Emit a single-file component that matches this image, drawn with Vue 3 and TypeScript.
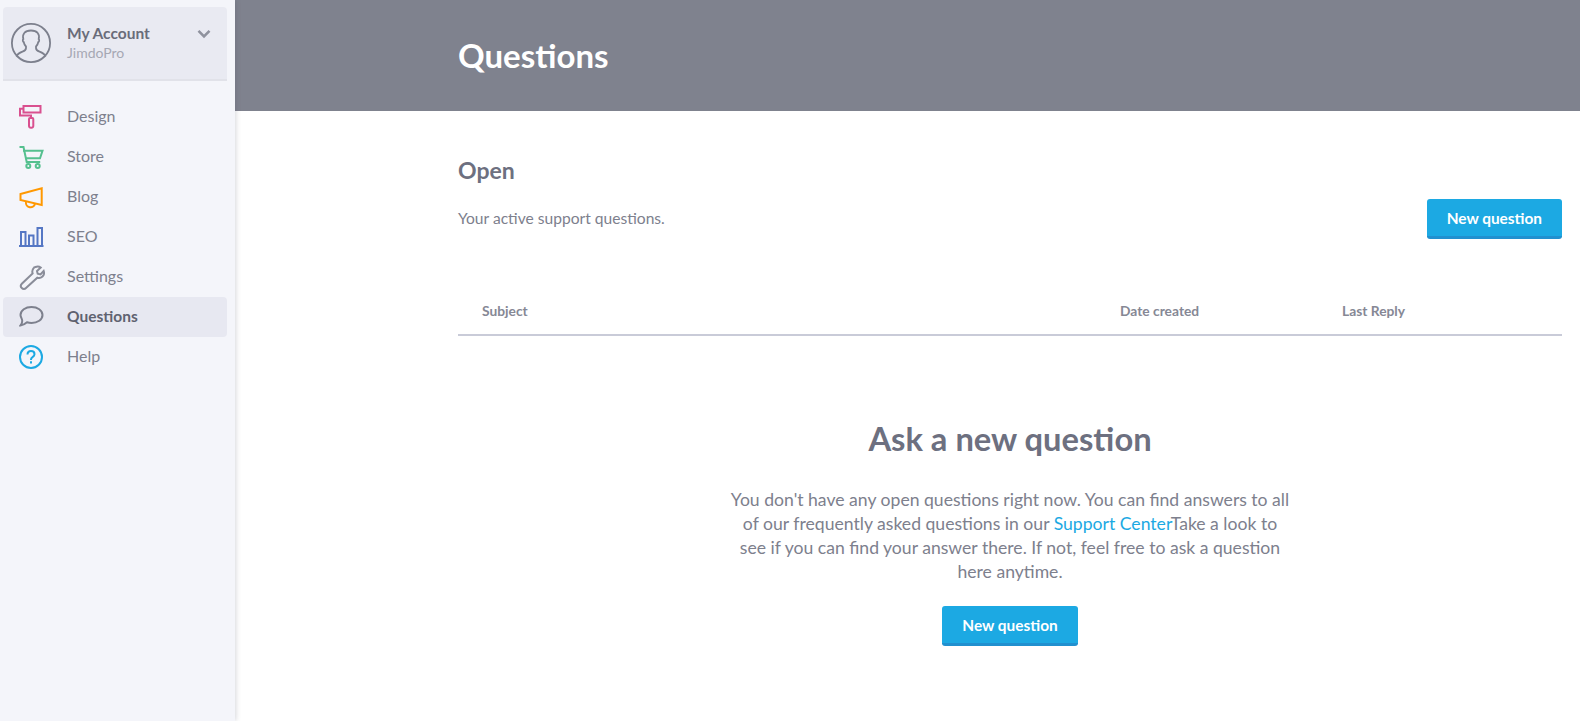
<template>
  <div class="page">
    <aside class="sidebar">
      <div class="account">
        <svg class="avatar" width="42" height="42" viewBox="0 0 42 42" fill="none" stroke="#7d808d" stroke-width="1.800">
          <circle cx="21" cy="21" r="19.100" />
          <path d="M6.500 34.500c1-3 3.200-3.800 6-4.800 2.200-.8 3.500-1.700 3.500-3.700v-1.500c-1.500-1.500-2-3-2.300-4.500-1-.3-1.200-2.500-.4-3-.5-2-.3-4.500 1-6 1-1.200 3.500-2.500 6.700-2.500s5.700 1.300 6.700 2.500c1.300 1.500 1.500 4 1 6 .8.500.6 2.700-.4 3-.3 1.500-.8 3-2.300 4.500V26c0 2 1.300 2.900 3.500 3.700 2.800 1 5 1.800 6 4.800" />
        </svg>
        <div class="account-text">
          <div class="account-name">My Account</div>
          <div class="account-plan">JimdoPro</div>
        </div>
        <svg class="chevron" width="14" height="10" viewBox="0 0 14 10" fill="none" stroke="#8f929e" stroke-width="2.600">
          <path d="M1.500 1.800 7 7.300l5.500-5.500" />
        </svg>
      </div>

      <nav class="nav">
        <a v-for="item in navItems" :key="item.label" class="nav-item" :class="{ active: item.active }">
          <span class="nav-icon" :style="{ color: item.color }">
            <svg width="26" height="26" viewBox="0 0 26 26" fill="none" stroke="currentColor" stroke-width="2">
              <path v-for="(d, i) in item.paths" :key="i" :d="d" />
              <circle v-for="(c, i) in item.circles || []" :key="'c' + i" :cx="c[0]" :cy="c[1]" :r="c[2]" />
            </svg>
          </span>
          <span class="nav-label">{{ item.label }}</span>
        </a>
      </nav>
    </aside>

    <main class="main">
      <header class="banner">
        <h1>Questions</h1>
      </header>

      <section class="content">
        <h2>Open</h2>
        <div class="intro">
          <p>Your active support questions.</p>
          <button class="btn" type="button">New question</button>
        </div>

        <div class="table-head">
          <span class="col-subject">Subject</span>
          <span class="col-date">Date created</span>
          <span class="col-reply">Last Reply</span>
        </div>

        <div class="empty">
          <h3>Ask a new question</h3>
          <p>
            You don't have any open questions right now. You can find answers to all of our frequently asked
            questions in our <a class="link">Support Center</a>Take a look to see if you can find your answer
            there. If not, feel free to ask a question here anytime.
          </p>
          <button class="btn" type="button">New question</button>
        </div>
      </section>
    </main>
  </div>
</template>

<script setup lang="ts">
interface NavItem {
  label: string
  color: string
  paths: string[]
  circles?: number[][]
  active?: boolean
}

const navItems: NavItem[] = [
  {
    label: 'Design',
    color: '#d9508f',
    paths: [
      'M4.500 2h17v6.500h-17z',
      'M4.500 4.800H1v6.700h11v2.500',
      'M11 14h2.300a1 1 0 0 1 1 1v7a1.800 1.800 0 0 1-1.800 1.800h-.7A1.800 1.800 0 0 1 10 22v-7a1 1 0 0 1 1-1z'
    ]
  },
  {
    label: 'Store',
    color: '#55c08f',
    paths: ['M.500 3h4l3.200 15h13.500', 'M4 6.700h19.500l-2.500 7.500H6'],
    circles: [[9.300, 22, 2], [18.700, 22, 2]]
  },
  {
    label: 'Blog',
    color: '#ff9800',
    paths: ['M1.500 10 22.700 4.300V21L1.500 16z', 'M7 18a4.500 4.500 0 0 0 9 1.500']
  },
  {
    label: 'SEO',
    color: '#5577c4',
    paths: ['M0 22h24.500', 'M2 22V8h4.500v14', 'M10 22V11.500h4.500V22', 'M18.500 22V4H23v18']
  },
  {
    label: 'Settings',
    color: '#8a8d99',
    paths: [
      'M16.500 3c2-.7 4-.3 5.200.600l-3.700 3.400.7 2.800 2.800.7 3.200-3.500c.7 2 .2 4.200-1.200 5.500-1.500 1.400-3.500 1.800-5.200 1.200L7 24c-1.200 1.200-3 1.200-4.200 0-1.200-1.200-1.200-3 0-4.200l10.800-10.400c-.6-1.800-.2-4 1.200-5.600.5-.6 1-.4 1.700-.8z'
    ]
  },
  {
    label: 'Questions',
    color: '#7d808d',
    active: true,
    paths: [
      'M12.500 3c6 0 11 3.400 11 8s-5 8-11 8c-1.500 0-3-.2-4.500-.7-1.700 1.500-4 3-6.500 3.200 1.200-1.300 1.800-3 1.700-5C3 14.500 1.500 13 1.500 11c0-4.600 5-8 11-8z'
    ]
  },
  {
    label: 'Help',
    color: '#1ca9e3',
    paths: [
      'M8.500 10.500c0-2.200 1.600-3.500 3.500-3.500s3.500 1.300 3.500 3.200c0 1.500-1 2.200-2 2.900-.9.600-1.500 1.200-1.500 2.400v.5',
      'M12 17.300v2.200'
    ],
    circles: [[12, 13, 11]]
  }
]
</script>

<style>
html,
body {
  margin: 0;
  background: #fff;
}
</style>

<style scoped>
.page {
  display: flex;
  height: 721px;
  overflow: hidden;
  font-family: Lato, "Noto Sans", sans-serif;
  color: #6d7080;
}

.sidebar {
  flex: 0 0 235px;
  box-sizing: border-box;
  padding: 7px 8px 0 3px;
  background: #f4f5fa;
  box-shadow: 1px 0 5px rgba(70, 74, 90, 0.22);
  z-index: 1;
}

.account {
  display: flex;
  align-items: center;
  box-sizing: border-box;
  height: 74px;
  padding: 0 16px 0 7px;
  background: #e9eaf2;
  border-bottom: 2px solid #e1e2e9;
  border-radius: 4px 4px 0 0;
}

.avatar {
  flex: none;
  margin-right: 15px;
}

.account-text {
  flex: 1;
  padding-bottom: 2px;
}

.account-name {
  font-size: 15.500px;
  font-weight: 700;
  line-height: 20px;
  color: #696c7a;
}

.account-plan {
  margin-top: 1px;
  font-size: 14px;
  line-height: 18px;
  color: #a6a8b4;
}

.chevron {
  flex: none;
  margin-top: -18px;
}

.nav {
  display: flex;
  flex-direction: column;
  margin-top: 16px;
}

.nav-item {
  display: flex;
  align-items: center;
  height: 40px;
  padding-left: 16px;
  border-radius: 4px;
  font-size: 16px;
  color: #7d808d;
}

.nav-item.active {
  background: #e7e8f1;
  font-size: 15.500px;
  font-weight: 700;
  color: #5f6270;
}

.nav-icon {
  display: flex;
  width: 48px;
}

.nav-label {
  padding-bottom: 4px;
}

.nav-item.active .nav-label {
  padding-bottom: 2px;
}

.main {
  flex: 1;
  min-width: 0;
}

.banner {
  display: flex;
  align-items: center;
  height: 111px;
  padding-left: 223px;
  background: #7f828e;
}

.banner h1 {
  margin: 0 0 2px;
  font-size: 33px;
  font-weight: 700;
  color: #fff;
}

.content {
  padding: 46px 18px 0 223px;
}

.content h2 {
  margin: 0;
  font-size: 23px;
  line-height: 26px;
  font-weight: 700;
  color: #6d7080;
}

.intro {
  display: flex;
  justify-content: space-between;
  align-items: center;
  margin-top: 16px;
}

.intro p {
  margin: 0;
  padding-bottom: 3px;
  font-size: 15.600px;
  color: #7d808d;
}

.btn {
  height: 40px;
  padding: 0 20px;
  border: 0;
  border-bottom: 3px solid #2190cf;
  border-radius: 3px;
  background: #1ca9e3;
  font-family: inherit;
  font-size: 15.400px;
  font-weight: 700;
  color: #fff;
}

.table-head {
  display: grid;
  grid-template-columns: 638px 222px 1fr;
  align-items: center;
  height: 48px;
  margin-top: 47px;
  padding-left: 24px;
  border-bottom: 2px solid #c9cbd8;
  font-size: 13.800px;
  font-weight: 700;
  color: #868895;
}

.empty {
  display: flex;
  flex-direction: column;
  align-items: center;
  padding-top: 81px;
  text-align: center;
}

.empty h3 {
  margin: 0;
  font-size: 32.700px;
  line-height: 44px;
  font-weight: 700;
  color: #6d7080;
}

.empty p {
  width: 562px;
  margin: 27px 0 22px;
  font-size: 17.600px;
  line-height: 24px;
  color: #7d808d;
}

.link {
  color: #1ca9e3;
}
</style>
